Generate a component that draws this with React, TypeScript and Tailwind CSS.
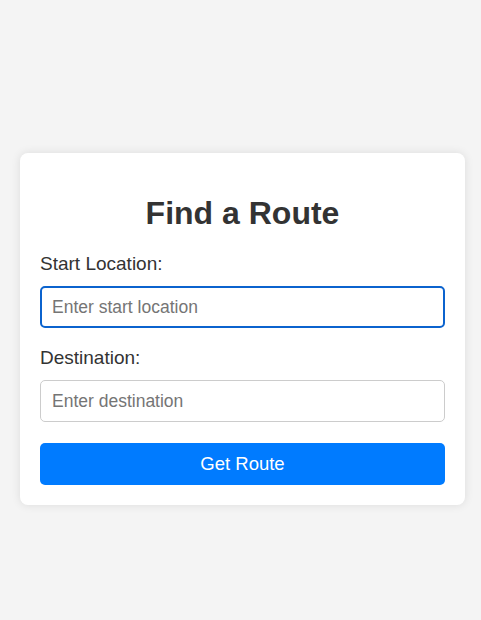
import React from "react";

export default function App() {
  return (
    <div
      className="min-h-screen w-full bg-[#f4f4f4] pt-[153px]"
      style={{ fontFamily: '"Liberation Sans", Arial, sans-serif' }}
    >
      <div className="ml-[20px] w-[445px] rounded-lg bg-white p-5 shadow-[0_0_10px_rgba(0,0,0,0.1)]">
        <h2 className="mt-[22px] mb-[23px] text-center text-[32px] leading-[36px] font-bold text-[#333]">
          Find a Route
        </h2>
        <label className="mb-3 block text-[19px] leading-[20px] text-[#333]">
          Start Location:
        </label>
        <input
          autoFocus
          type="text"
          placeholder="Enter start location"
          className="mb-5 block h-[42px] w-full rounded-[5px] border-2 border-[#0b63ce] bg-white px-[10px] text-[17.5px] text-[#333] outline-none placeholder:text-[#757575]"
        />
        <label className="mb-3 block text-[19px] leading-[20px] text-[#333]">
          Destination:
        </label>
        <input
          type="text"
          placeholder="Enter destination"
          className="mb-[21px] block h-[42px] w-full rounded-[5px] border border-[#ccc] bg-white px-[11px] text-[17.5px] text-[#333] outline-none placeholder:text-[#757575]"
        />
        <button className="block h-[42px] w-full rounded-[5px] bg-[#007bff] text-[18.5px] text-white">
          Get Route
        </button>
      </div>
    </div>
  );
}
